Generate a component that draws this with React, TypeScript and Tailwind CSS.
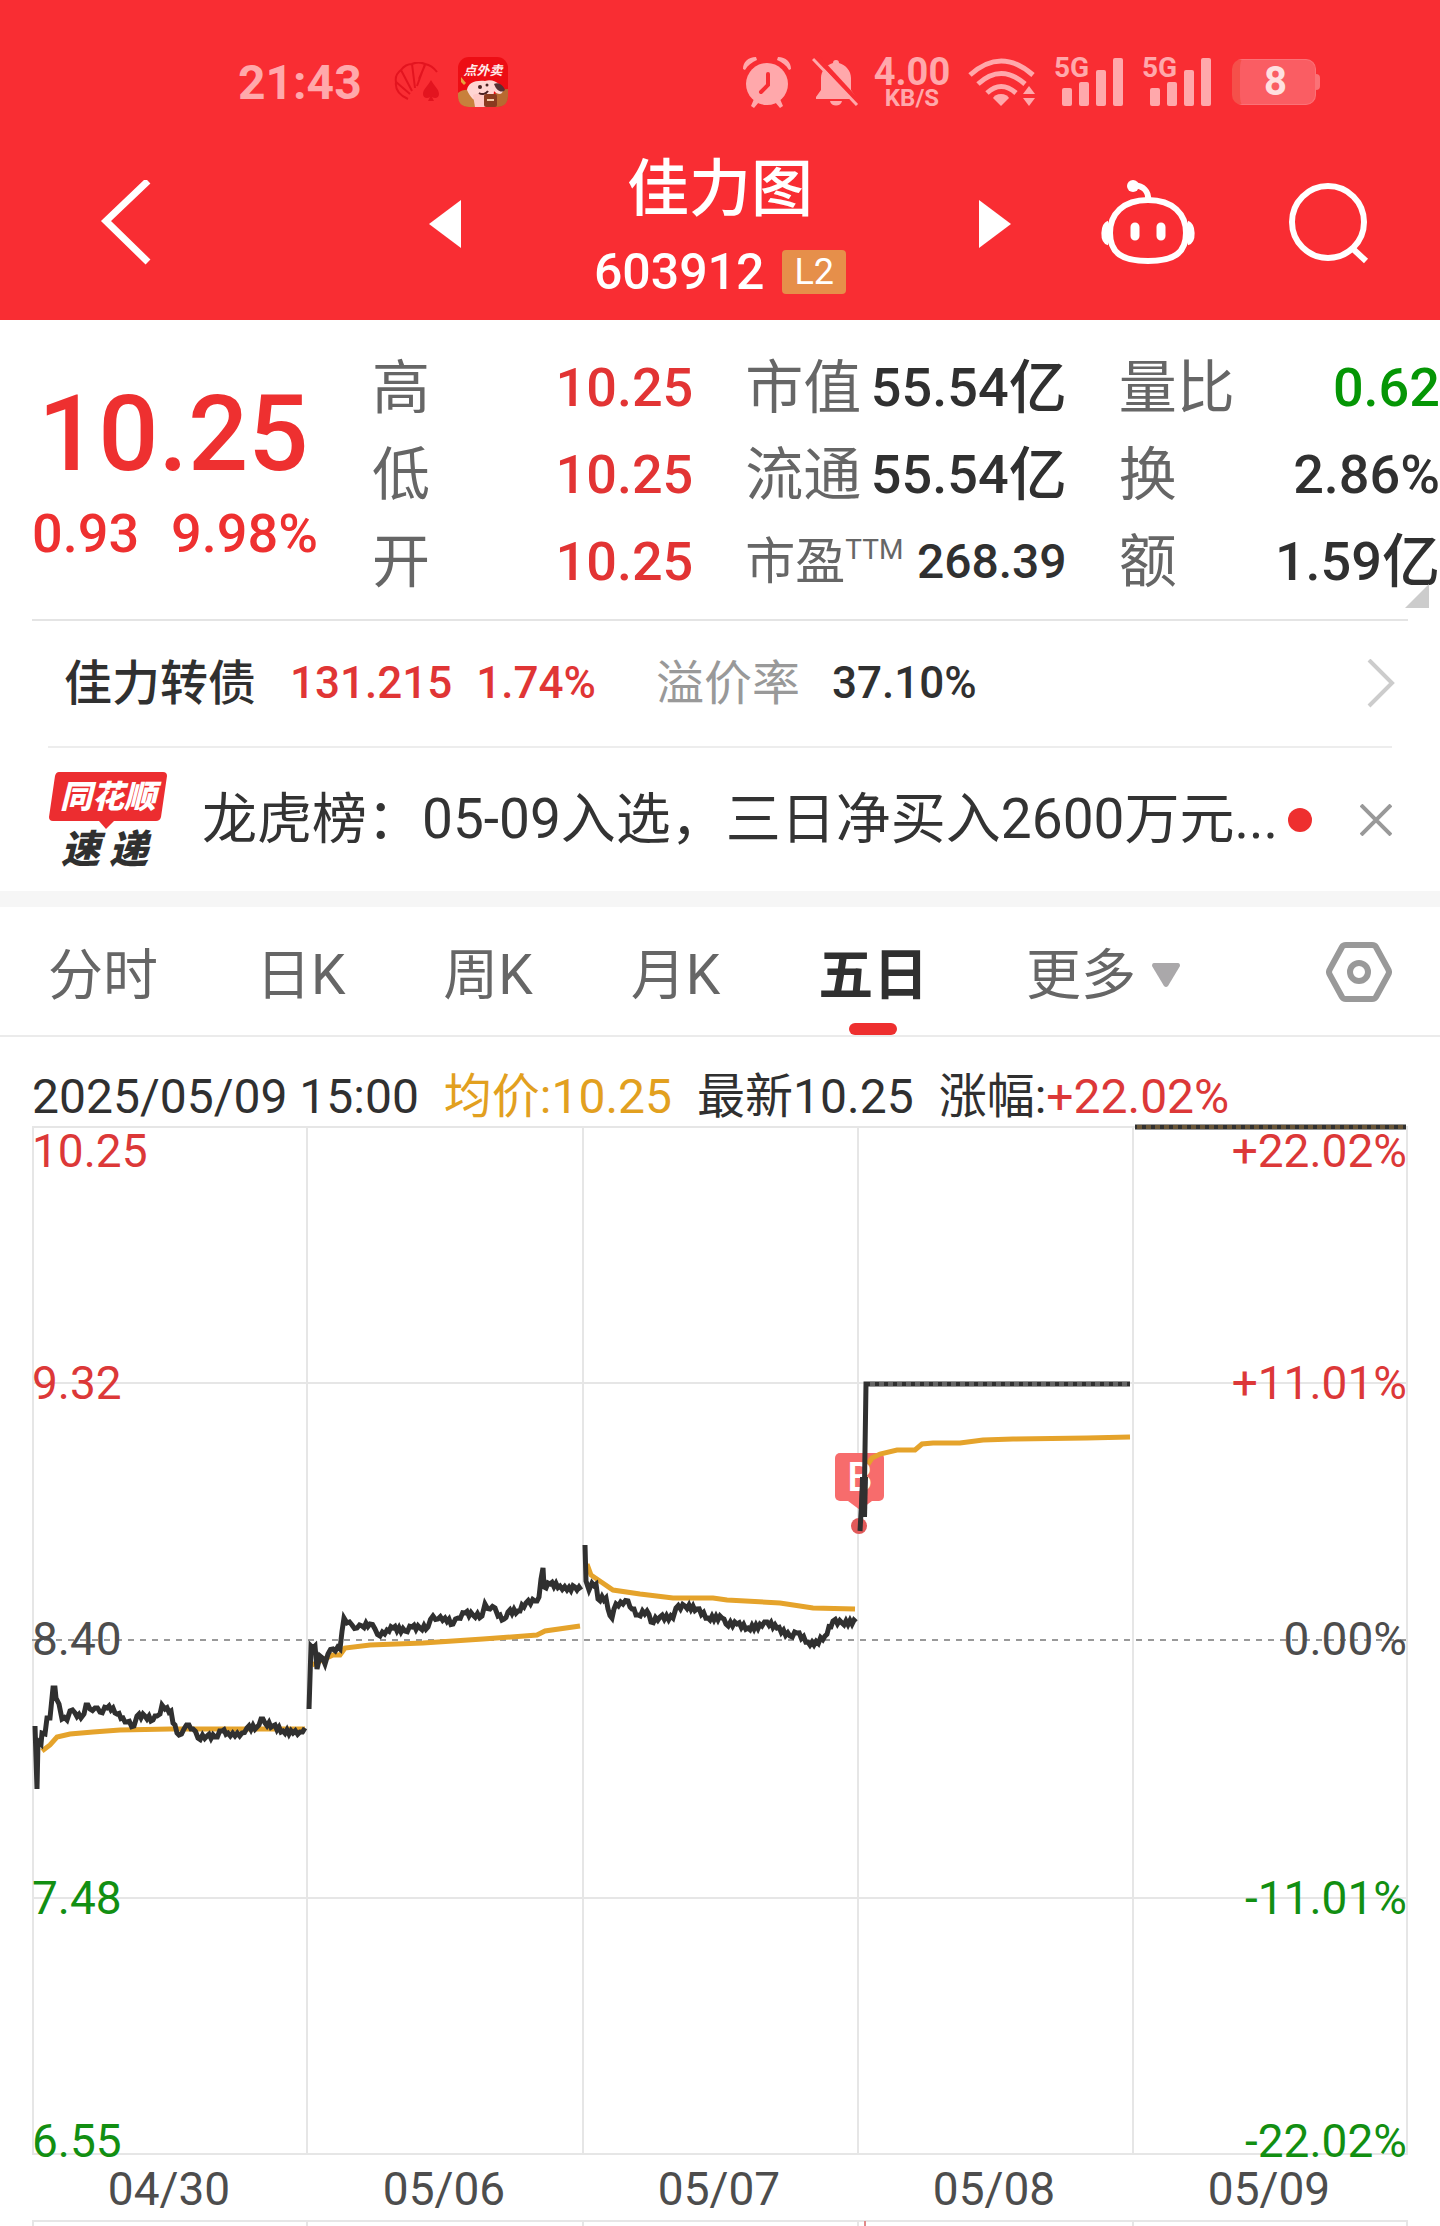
import React, { useState } from "react";

type Point = [number, number];

interface IQuoteItem {
  label: string;
  value: string;
  unit?: string;
  sup?: string;
  color?: string;
}

const quoteColumns: IQuoteItem[][] = [
  [
    { label: "高", value: "10.25", color: "text-[#e23434]" },
    { label: "低", value: "10.25", color: "text-[#e23434]" },
    { label: "开", value: "10.25", color: "text-[#e23434]" },
  ],
  [
    { label: "市值", value: "55.54", unit: "亿" },
    { label: "流通", value: "55.54", unit: "亿" },
    { label: "市盈", value: "268.39", sup: "TTM" },
  ],
  [
    { label: "量比", value: "0.62", color: "text-[#059605]" },
    { label: "换", value: "2.86%" },
    { label: "额", value: "1.59", unit: "亿" },
  ],
];

const tabs = ["分时", "日K", "周K", "月K", "五日"];

const gridX = [33, 307, 583, 858, 1133, 1407];
const gridY = [10, 266, 781, 1037];

const axisLabels = [
  { y: 50, price: "10.25", rate: "+22.02%", fill: "#dc3838" },
  { y: 282, price: "9.32", rate: "+11.01%", fill: "#dc3838" },
  { y: 538, price: "8.40", rate: "0.00%", fill: "#4d4d4d" },
  { y: 797, price: "7.48", rate: "-11.01%", fill: "#128f12" },
  { y: 1040, price: "6.55", rate: "-22.02%", fill: "#128f12" },
];

const dates = [
  { x: 169, text: "04/30" },
  { x: 444, text: "05/06" },
  { x: 719, text: "05/07" },
  { x: 994, text: "05/08" },
  { x: 1269, text: "05/09" },
];

const priceLines: Point[][] = [
  [
    [35, 609], [37, 672], [38, 624], [41, 627], [42, 616], [45, 617], [47, 601], [50, 601],
    [53, 571], [55, 571], [56, 581], [59, 587], [62, 602], [67, 603], [70, 594], [75, 596],
    [81, 601], [84, 597], [86, 588], [90, 592], [95, 591], [100, 595], [107, 591], [113, 591],
    [117, 597], [123, 601], [127, 605], [134, 609], [137, 599], [145, 599], [153, 603],
    [157, 599], [160, 597], [162, 588], [165, 592], [171, 594], [173, 606], [179, 618],
    [184, 612], [189, 608], [193, 612], [198, 621], [207, 619], [215, 620], [222, 614],
    [228, 616], [235, 619], [242, 616], [247, 611], [257, 610], [261, 602], [265, 606],
    [273, 609], [283, 614], [293, 616], [300, 615], [305, 611],
  ],
  [
    [309, 592], [311, 529], [315, 529], [317, 552], [320, 539], [325, 547], [328, 537],
    [333, 532], [340, 532], [344, 501], [347, 506], [352, 508], [357, 511], [362, 509],
    [370, 507], [375, 512], [380, 519], [387, 513], [393, 511], [405, 514], [412, 510],
    [420, 511], [428, 510], [433, 499], [438, 502], [445, 501], [453, 507], [458, 501],
    [465, 496], [473, 498], [482, 499], [485, 487], [490, 492], [495, 491], [498, 499],
    [504, 502], [508, 495], [518, 494], [526, 486], [535, 484], [539, 480], [541, 462],
    [543, 451], [544, 470], [550, 467], [560, 469], [567, 473], [575, 470], [581, 473],
  ],
  [
    [585, 428], [586, 464], [589, 473], [592, 466], [596, 467], [598, 482], [606, 481],
    [608, 492], [612, 501], [616, 487], [623, 487], [628, 484], [632, 492], [638, 498],
    [647, 494], [651, 505], [660, 500], [673, 501], [676, 491], [685, 489], [697, 492],
    [708, 501], [722, 501], [726, 507], [737, 507], [748, 511], [762, 509], [767, 505],
    [777, 511], [790, 519], [797, 516], [808, 525], [814, 528], [825, 519], [833, 504],
    [842, 506], [856, 505],
  ],
];

const averageLines = [
  "42,634 50,628 57,620 70,617 93,615 120,613 170,612 305,612",
  "312,548 333,538 340,538 345,531 370,528 423,526 483,522 537,518 545,514 580,509",
  "587,447 591,458 613,473 640,477 673,481 713,481 727,483 780,486 813,491 855,492",
  "868,347 872,341 880,337 897,333 915,333 922,327 933,326 960,326 983,323 1013,322 1087,321 1130,320",
];

const toTicks = (points: Point[]) => {
  const out: string[] = [];
  points.forEach(([x, y], i) => {
    out.push(`${x},${y}`);
    const next = points[i + 1];
    if (!next) return;
    const steps = Math.floor((next[0] - x) / 2);
    for (let s = 1; s < steps; s++) {
      const t = s / steps;
      const wobble = (s + i) % 2 === 0 ? 2 : -2;
      out.push(`${x + (next[0] - x) * t},${y + (next[1] - y) * t + wobble}`);
    }
  });
  return out.join(" ");
};

const SignalIcon: React.FC = () => (
  <div className="relative w-[70px] h-13">
    <span className="absolute left-0 top-0 text-[28px] leading-6 font-bold">5G</span>
    <svg viewBox="0 0 70 52" className="w-[70px] h-13" fill="currentColor">
      <rect x="8" y="32" width="10" height="18" rx="2" />
      <rect x="25" y="26" width="10" height="24" rx="2" />
      <rect x="42" y="14" width="10" height="36" rx="2" />
      <rect x="59" y="2" width="10" height="48" rx="2" />
    </svg>
  </div>
);

const StatusBar: React.FC = () => (
  <div className="flex items-center justify-between pt-14 pl-[238px] pr-[120px] text-[#ffa8ab]">
    <div className="flex items-center">
      <span className="pt-0.5 text-[48px] leading-[50px] font-bold">21:43</span>
      <svg viewBox="0 0 48 40" className="ml-8 w-12 h-10" fill="none" stroke="#e3141f" strokeWidth="2">
        <path d="M14 37C5 33 1 27 2 20l14 12M2 20c-1-5 1-9 5-12l11 21M7 8c3-4 7-6 11-6l3 24M18 2c4-2 9-2 13 0l-8 22M31 2c5 1 9 4 12 8M31 3l-6 14" />
        <path d="M37 18c3 6 8 9 8 14 0 4-4 5-7 3l2 4h-6l2-4c-3 2-7 1-7-3 0-5 5-8 8-14z" fill="#e3141f" stroke="none" />
      </svg>
      <svg viewBox="0 0 50 50" className="ml-4 w-[50px] h-[50px]">
        <rect width="50" height="50" rx="11" fill="#ed0d14" />
        <path d="M0 36c6-5 15-4 20 2l8 12H11C4 50 0 46 0 39z" fill="#c8803c" />
        <path d="M50 32c-8 0-14 4-17 11v7h6c7 0 11-4 11-11z" fill="#b86a31" />
        <path d="M3 20l5 6-2 2-3-3z" fill="#e8a33d" />
        <path d="M9 33c1-7 8-10 18-9 5-2 11 0 15 4 4 3 4 8 0 9-3 0-5-2-6-3 0 7-5 11-12 11-8 0-12-5-15-12z" fill="#ffd5d3" />
        <path d="M15 38c2-2 18-2 19 2l-2 10H17z" fill="#ffc9c6" />
        <path d="M36 27c4-2 9 1 11 6-3 3-8 2-11-6z" fill="#573033" />
        <circle cx="22" cy="30" r="2" fill="#4a2022" />
        <circle cx="29" cy="28" r="1.5" fill="#4a2022" />
        <path d="M21 36c3 2 7 1 9-2" fill="none" stroke="#4a2022" strokeWidth="2" />
        <rect x="26" y="37" width="13" height="13" rx="2" fill="#8a3a1f" />
        <path d="M29 43h7" stroke="#f3c9a5" strokeWidth="2" />
        <text x="25" y="18" textAnchor="middle" fontSize="13" fontStyle="italic" fontWeight="700" fill="#ffe9e9">
          点外卖
        </text>
      </svg>
    </div>
    <div className="flex items-center">
      <svg viewBox="0 0 50 52" className="w-[50px] h-13" fill="currentColor">
        <path d="M1 13C1 6 6 1 14 1l1 3C10 6 6 9 3 14zM49 13C49 6 44 1 36 1l-1 3c5 2 9 5 12 10z" />
        <path d="M12 43l5 3-5 6-3-2zM38 43l-5 3 5 6 3-2z" />
        <circle cx="25" cy="28" r="21" />
        <path d="M26 18v11l-7 7" fill="none" stroke="#f92d33" strokeWidth="4" strokeLinecap="round" />
      </svg>
      <svg viewBox="0 0 48 52" className="ml-5 w-12 h-13">
        <path
          d="M24 4c2 0 3 1 3 3 7 2 12 8 12 15v12l5 7v2H4v-2l5-7V22C9 15 14 9 21 7c0-2 1-3 3-3zM18 45h12c-1 6-11 6-12 0z"
          fill="currentColor"
        />
        <path d="M4 0l46 50" stroke="#f92d33" strokeWidth="5" />
        <path d="M1 3l44 46" stroke="currentColor" strokeWidth="3" />
      </svg>
      <div className="ml-3 flex w-20 flex-col items-center">
        <span className="text-[38px] leading-8 font-bold">4.00</span>
        <span className="text-[24px] leading-5 font-bold">KB/S</span>
      </div>
      <svg viewBox="0 0 68 52" className="ml-4 w-[68px] h-13" fill="none" stroke="currentColor" strokeWidth="5">
        <path d="M2 19Q33-9 65 19" />
        <path d="M10 28Q33 7 57 28" />
        <path d="M19 37q14-13 29 0" />
        <path d="M33 38c4 0 7 2 8 4l-8 8-8-8c1-2 4-4 8-4z" fill="currentColor" stroke="none" />
        <path d="M55 38l6-8 6 8zM55 42l6 8 6-8z" fill="currentColor" stroke="none" />
      </svg>
      <div className="ml-[18px] flex gap-[18px]">
        <SignalIcon />
        <SignalIcon />
      </div>
      <div className="ml-5 flex items-center">
        <span className="flex h-[46px] w-[84px] items-center justify-center overflow-hidden rounded-[10px] border border-[#fb7277] border-l-8 border-l-[#f5504a] bg-[#fa5d63] pr-1 text-[40px] font-bold text-[#ffe0e0]">
          8
        </span>
        <span className="h-4 w-1 rounded-r bg-[#fb7277]" />
      </div>
    </div>
  </div>
);

const Header: React.FC = () => (
  <header className="bg-[#f92d33] text-white">
    <StatusBar />
    <nav className="grid grid-cols-[1fr_582px_1fr] items-center pt-[38px] pb-[18px]">
      <div className="pl-[100px]">
        <button aria-label="返回" className="block">
          <svg viewBox="0 0 52 88" className="h-[88px] w-[52px]" fill="none" stroke="currentColor" strokeWidth="7">
            <path d="M48 1L6 41l42 41" />
          </svg>
        </button>
      </div>
      <div className="flex items-center justify-between">
        <button aria-label="上一只">
          <svg viewBox="0 0 32 48" className="h-12 w-8" fill="currentColor">
            <path d="M32 0v48L0 24z" />
          </svg>
        </button>
        <div className="flex flex-col items-center">
          <h1 className="pt-1 text-[62px] leading-[80px] font-medium">佳力图</h1>
          <div className="mt-3 flex items-center gap-[18px]">
            <span className="text-[50px] leading-[60px] font-medium">603912</span>
            <span className="rounded bg-[#e68f4a] px-3 text-[36px] leading-11">L2</span>
          </div>
        </div>
        <button aria-label="下一只">
          <svg viewBox="0 0 32 48" className="h-12 w-8" fill="currentColor">
            <path d="M0 0v48l32-24z" />
          </svg>
        </button>
      </div>
      <div className="flex items-center justify-between pl-[90px] pr-[70px]">
        <button aria-label="智能助手">
          <svg viewBox="0 0 94 88" className="h-[88px] w-[94px]" fill="none" stroke="currentColor" strokeWidth="6">
            <path d="M47 20C22 20 9 34 9 53c0 20 12 28 38 28s38-8 38-28c0-19-13-33-38-33z" />
            <path d="M8 44c-5 2-6 16 0 18M86 44c5 2 6 16 0 18" strokeWidth="7" />
            <path d="M47 20c1-9-5-14-14-15" />
            <circle cx="32" cy="6" r="6" fill="currentColor" stroke="none" />
            <path d="M34 47v9M60 47v9" strokeWidth="9" strokeLinecap="round" />
          </svg>
        </button>
        <button aria-label="搜索">
          <svg viewBox="0 0 82 84" className="h-[84px] w-[82px]" fill="none" stroke="currentColor" strokeWidth="6">
            <circle cx="40" cy="40" r="36" />
            <path d="M64 66l14 13" />
          </svg>
        </button>
      </div>
    </nav>
  </header>
);

const QuoteRow: React.FC<{ item: IQuoteItem }> = ({ item }) => (
  <div className="flex h-[87px] items-center justify-between">
    <dt className={item.sup ? "flex text-[50px] text-[#666]" : "text-[58px] text-[#666]"}>
      {item.label}
      {item.sup && <sup className="top-0 mt-3 text-[28px] leading-8">{item.sup}</sup>}
    </dt>
    <dd className={`flex items-center font-medium ${item.color ?? "text-[#303030]"}`}>
      <span className={item.sup ? "text-[48px]" : "text-[54px]"}>{item.value}</span>
      {item.unit && <span className="text-[58px]">{item.unit}</span>}
    </dd>
  </div>
);

const Quote: React.FC = () => (
  <section className="relative flex pt-6 pb-3.5 leading-[80px]">
    <div className="w-[372px] pt-[30px] pl-8 font-medium text-[#ee3030]">
      <div className="pl-1.5 text-[106px] leading-[120px]">10.25</div>
      <div className="mt-2.5 flex gap-8 text-[54px] leading-[60px]">
        <span>0.93</span>
        <span>9.98%</span>
      </div>
    </div>
    <div className="grid flex-1 grid-cols-3 gap-x-[52px]">
      {quoteColumns.map((column, i) => (
        <dl key={i}>
          {column.map((item) => (
            <QuoteRow key={item.label} item={item} />
          ))}
        </dl>
      ))}
    </div>
    <svg viewBox="0 0 24 24" className="absolute right-[11px] bottom-[11px] h-6 w-6" fill="#ccc">
      <path d="M24 0v24H0z" />
    </svg>
  </section>
);

const BondRow: React.FC = () => (
  <a href="#bond" className="mx-8 flex items-center border-t-2 border-[#e4e4e4] pr-3 pl-8 text-[48px] leading-[125px]">
    <span className="font-medium text-[#303030]">佳力转债</span>
    <span className="ml-[34px] text-[44px] font-medium text-[#e03535]">131.215</span>
    <span className="ml-6 text-[44px] font-medium text-[#e03535]">1.74%</span>
    <span className="ml-[60px] text-[#999]">溢价率</span>
    <span className="ml-8 text-[44px] font-medium text-[#303030]">37.10%</span>
    <svg viewBox="0 0 30 50" className="ml-auto h-[50px] w-[30px]" fill="none" stroke="#ccc" strokeWidth="4">
      <path d="M3 1l23 23L3 47" />
    </svg>
  </a>
);

const NewsRow: React.FC = () => (
  <div className="mx-12 flex items-center border-t-2 border-[#ededed] text-[#333]">
    <svg viewBox="0 0 120 98" className="h-[98px] w-[120px] shrink-0 overflow-visible" fontStyle="italic" fontWeight="900">
      <path d="M11 1h104q4 0 4 4l-6 41q-1 4-5 4H66l-8 8-7-8H5q-4 0-4-4L7 5q1-4 4-4z" fill="#ec2d30" />
      <text x="60" y="37" textAnchor="middle" fontSize="32" fill="#fff">
        同花顺
      </text>
      <text x="13" y="92" fontSize="39" fill="#303030">
        速
      </text>
      <text x="61" y="92" fontSize="39" fill="#303030">
        递
      </text>
    </svg>
    <p className="ml-[34px] text-[55px] leading-[143px] whitespace-nowrap">
      龙虎榜：05-09入选，三日净买入2600万元...
    </p>
    <span className="ml-2.5 h-6 w-6 shrink-0 rounded-full bg-[#ee2f2f]" />
    <button aria-label="关闭" className="ml-auto">
      <svg viewBox="0 0 32 32" className="h-8 w-8" fill="none" stroke="#999" strokeWidth="4">
        <path d="M1 1l30 30M31 1L1 31" />
      </svg>
    </button>
  </div>
);

const ChartTabs: React.FC = () => {
  const [active, setActive] = useState("五日");

  return (
    <div className="flex items-center justify-between border-t-16 border-b-2 border-t-[#f6f6f6] border-b-[#ebebeb] px-12 pt-2 text-[55px] leading-[120px] text-[#666]">
      {tabs.map((tab) => (
        <button
          key={tab}
          onClick={() => setActive(tab)}
          className={tab === active ? "relative font-bold text-[#303030]" : "relative"}
        >
          {tab}
          {tab === active && (
            <span className="absolute bottom-0 left-1/2 h-3 w-12 -translate-x-1/2 rounded-md bg-[#ee2f2f]" />
          )}
        </button>
      ))}
      <button className="flex items-center gap-4">
        更多
        <svg viewBox="0 0 28 24" className="h-6 w-7" fill="#aaa8aa">
          <path d="M2 0h24q2 0 2 3L16 23q-2 2-4 0L0 3q0-3 2-3z" />
        </svg>
      </button>
      <button aria-label="图表设置" className="ml-12">
        <svg viewBox="0 0 66 66" className="h-[66px] w-[66px]" fill="none" stroke="#999" strokeWidth="6">
          <path d="M20 3h26q3 0 4 2l12 22q2 3 0 6L50 55q-1 2-4 2H20q-3 0-4-2L4 33q-2-3 0-6L16 5q1-2 4-2z" />
          <circle cx="33" cy="30" r="9" />
        </svg>
      </button>
    </div>
  );
};

const FiveDayChart: React.FC = () => (
  <svg viewBox="0 0 1440 1109" className="block w-full" fill="none">
    <g stroke="#e6e6e6" strokeWidth="2">
      {gridX.map((x) => (
        <path key={x} d={`M${x} 10V1037M${x} 1104v5`} />
      ))}
      {gridY.map((y) => (
        <path key={y} d={`M32 ${y}H1408`} />
      ))}
      <path d="M32 1104H1408" />
      <path d="M865 1104v5" stroke="#e08a8a" />
    </g>
    <path d="M32 523H1408" stroke="#999" strokeWidth="2" strokeDasharray="6 6" />
    <g fill="#f76c6c">
      <rect x="835" y="336" width="49" height="48" rx="5" />
      <path d="M848 384h24l-12 9z" />
      <circle cx="859" cy="409" r="8" fill="#e15a5a" />
      <text x="860" y="374" textAnchor="middle" fontSize="40" fontWeight="500" fill="#fff">
        B
      </text>
    </g>
    <g stroke="#e5a32b" strokeWidth="5">
      {averageLines.map((points) => (
        <polyline key={points} points={points} />
      ))}
    </g>
    <g stroke="#303030" strokeWidth="5">
      {priceLines.map((points, i) => (
        <polyline key={i} points={toTicks(points)} />
      ))}
      <path d="M860 414l3-53M864 400l2-133H1130" />
      <path d="M863 400l1-40" strokeWidth="8" />
      <path d="M870 267H1130" stroke="#666" strokeWidth="4" strokeDasharray="5 4" />
      <path d="M1135 10H1406" />
      <path d="M1137 10H1406" stroke="#6a5638" strokeWidth="4" strokeDasharray="5 4" />
    </g>
    {axisLabels.map((label) => (
      <g key={label.price} fontSize="46" fill={label.fill}>
        <text x="32" y={label.y}>
          {label.price}
        </text>
        <text x="1407" y={label.y} textAnchor="end">
          {label.rate}
        </text>
      </g>
    ))}
    {dates.map((date) => (
      <text key={date.text} x={date.x} y="1088" textAnchor="middle" fontSize="46" fill="#4d4d4d">
        {date.text}
      </text>
    ))}
  </svg>
);

const App: React.FC = () => {
  return (
    <main className="min-h-screen overflow-hidden bg-white font-[Roboto,'Noto_Sans_CJK_SC',sans-serif]">
      <Header />
      <Quote />
      <BondRow />
      <NewsRow />
      <ChartTabs />
      <div className="flex gap-[25px] pt-10 pl-8 text-[48px] leading-10 whitespace-nowrap text-[#303030]">
        <span>2025/05/09 15:00</span>
        <span className="text-[#e2a01f]">均价:10.25</span>
        <span>最新10.25</span>
        <span>
          涨幅:<span className="text-[#dc3838]">+22.02%</span>
        </span>
      </div>
      <FiveDayChart />
    </main>
  );
};

export default App;
